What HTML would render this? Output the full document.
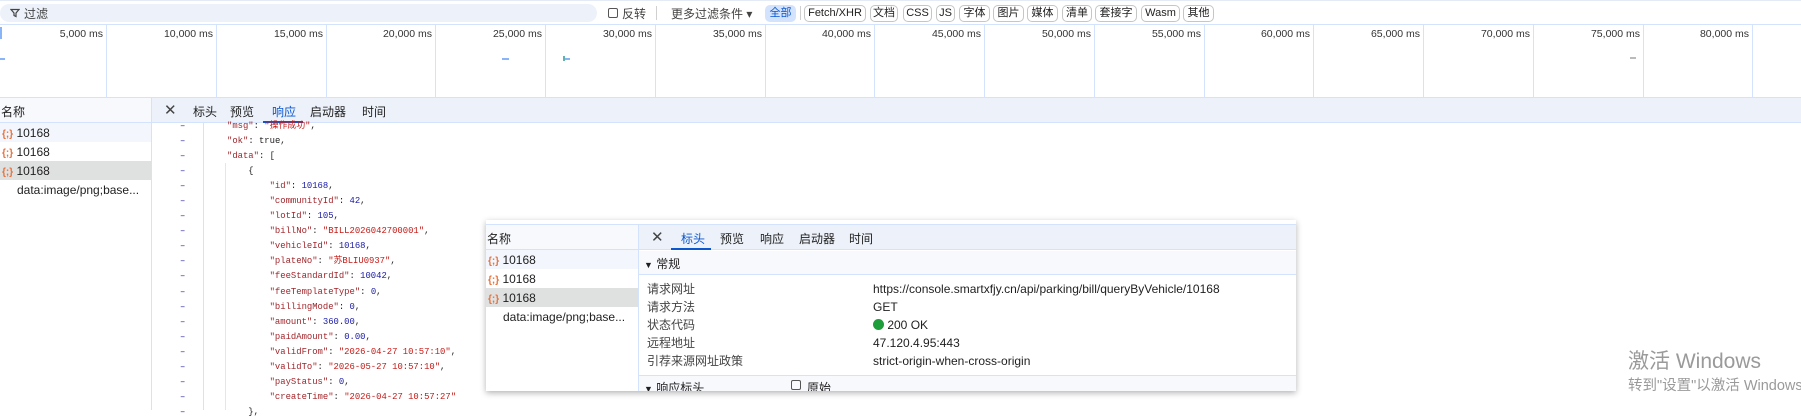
<!DOCTYPE html>
<html><head><meta charset="utf-8"><style>
*{box-sizing:border-box;margin:0;padding:0}
body{width:1801px;height:410px;overflow:hidden;background:#fff;font-family:"Liberation Sans","Noto Sans CJK SC",sans-serif;font-size:12px;color:#1f1f1f;position:relative}
.a{position:absolute;white-space:nowrap}
.btn{position:absolute;top:5px;height:17px;border:1px solid #c4c7c5;border-radius:5px;font-size:11px;line-height:15px;text-align:center;color:#1f1f1f}
.tl{position:absolute;top:25px;height:73px;width:1px;background:#d3e3fd}
.tlab{position:absolute;top:28px;font-size:10.5px;color:#333;text-align:right;width:70px}
.code{font-family:"Liberation Mono","Noto Sans CJK SC",monospace;font-size:8.9px;position:absolute;white-space:pre}
.k{color:#a1262b}.s{color:#c41a16}.n{color:#1a1aa6}
.ic{color:#e8703a;font-size:10px;font-weight:bold}
</style></head><body>
<div class="a" style="left:0;top:0;width:1801px;height:25px;border-bottom:1px solid #d3e3fd;border-top:1px solid #e4ebf7"></div>
<div class="a" style="left:0;top:4px;width:597px;height:18px;background:#edf2fa;border-radius:9px"></div>
<svg class="a" style="left:10px;top:8px" width="10" height="10" viewBox="0 0 10 10"><path d="M1 1.5H9L6 5V8.5L4 7.5V5Z" fill="none" stroke="#444" stroke-width="1.2"/></svg>
<div class="a" style="left:24px;top:5px;font-size:12px;color:#444">过滤</div>
<div class="a" style="left:608px;top:8px;width:10px;height:10px;border:1px solid #555;border-radius:2px"></div>
<div class="a" style="left:622px;top:5px;color:#444">反转</div>
<div class="a" style="left:656px;top:6px;width:1px;height:14px;background:#d0d0d0"></div>
<div class="a" style="left:671px;top:5px;color:#444">更多过滤条件 ▾</div>
<div class="btn" style="left:765px;width:31px;background:#d3e3fd;border-color:#d3e3fd;color:#0b57d0">全部</div>
<div class="a" style="left:800px;top:6px;width:1px;height:14px;background:#d0d0d0"></div>
<div class="btn" style="left:804px;width:62px">Fetch/XHR</div>
<div class="btn" style="left:870px;width:28px">文档</div>
<div class="btn" style="left:903px;width:29px">CSS</div>
<div class="btn" style="left:936px;width:19px">JS</div>
<div class="btn" style="left:959px;width:31px">字体</div>
<div class="btn" style="left:993px;width:31px">图片</div>
<div class="btn" style="left:1027px;width:31px">媒体</div>
<div class="btn" style="left:1062px;width:30px">清单</div>
<div class="btn" style="left:1095px;width:42px">套接字</div>
<div class="btn" style="left:1141px;width:39px">Wasm</div>
<div class="btn" style="left:1183px;width:31px">其他</div>
<div class="a" style="left:0;top:97px;width:1801px;height:1px;background:#d3e3fd"></div>
<div class="tl" style="left:106px"></div><div class="tlab" style="left:33px">5,000 ms</div>
<div class="tl" style="left:216px"></div><div class="tlab" style="left:143px">10,000 ms</div>
<div class="tl" style="left:326px"></div><div class="tlab" style="left:253px">15,000 ms</div>
<div class="tl" style="left:435px"></div><div class="tlab" style="left:362px">20,000 ms</div>
<div class="tl" style="left:545px"></div><div class="tlab" style="left:472px">25,000 ms</div>
<div class="tl" style="left:655px"></div><div class="tlab" style="left:582px">30,000 ms</div>
<div class="tl" style="left:765px"></div><div class="tlab" style="left:692px">35,000 ms</div>
<div class="tl" style="left:874px"></div><div class="tlab" style="left:801px">40,000 ms</div>
<div class="tl" style="left:984px"></div><div class="tlab" style="left:911px">45,000 ms</div>
<div class="tl" style="left:1094px"></div><div class="tlab" style="left:1021px">50,000 ms</div>
<div class="tl" style="left:1204px"></div><div class="tlab" style="left:1131px">55,000 ms</div>
<div class="tl" style="left:1313px"></div><div class="tlab" style="left:1240px">60,000 ms</div>
<div class="tl" style="left:1423px"></div><div class="tlab" style="left:1350px">65,000 ms</div>
<div class="tl" style="left:1533px"></div><div class="tlab" style="left:1460px">70,000 ms</div>
<div class="tl" style="left:1643px"></div><div class="tlab" style="left:1570px">75,000 ms</div>
<div class="tl" style="left:1752px"></div><div class="tlab" style="left:1679px">80,000 ms</div>
<div class="a" style="left:0;top:27px;width:2px;height:12px;background:#8ab4f8"></div>
<div class="a" style="left:0;top:58px;width:5px;height:2px;background:#8ab4f8"></div>
<div class="a" style="left:502px;top:58px;width:7px;height:2px;background:#8ab4f8"></div>
<div class="a" style="left:563px;top:56px;width:2px;height:5px;background:#5fb3b3"></div>
<div class="a" style="left:565px;top:58px;width:5px;height:2px;background:#8ab4f8"></div>
<div class="a" style="left:1630px;top:57px;width:6px;height:2px;background:#bbb"></div>
<div class="a" style="left:0;top:98px;width:152px;height:25px;background:#f8f9fd;border-bottom:1px solid #d3e3fd"></div>
<div class="a" style="left:1px;top:103px">名称</div>
<div class="a" style="left:151px;top:98px;width:1px;height:312px;background:#d3e3fd"></div>
<div class="a" style="left:0;top:123px;width:151px;height:19px;background:#f3f6fc"></div>
<div class="a" style="left:0;top:161px;width:151px;height:19px;background:#dfe1e0"></div>
<div class="a" style="left:2px;top:126px"><span class="ic">{;}</span> 10168</div>
<div class="a" style="left:2px;top:145px"><span class="ic">{;}</span> 10168</div>
<div class="a" style="left:2px;top:164px"><span class="ic">{;}</span> 10168</div>
<div class="a" style="left:17px;top:183px">data:image/png;base...</div>
<div class="a" style="left:152px;top:98px;width:1649px;height:25px;background:#edf2fa;border-bottom:1px solid #d3e3fd"></div>
<div class="a" style="left:164px;top:101px;font-size:15px;color:#444">✕</div>
<div class="a" style="left:193px;top:103px">标头</div>
<div class="a" style="left:230px;top:103px">预览</div>
<div class="a" style="left:272px;top:103px;color:#0b57d0">响应</div>
<div class="a" style="left:263px;top:121px;width:40px;height:2px;background:#0b57d0"></div>
<div class="a" style="left:310px;top:103px">启动器</div>
<div class="a" style="left:362px;top:103px">时间</div>
<div class="a" style="left:203px;top:123px;width:1px;height:287px;background:#d3e3fd"></div>
<div class="a" style="left:225px;top:163px;width:1px;height:247px;background:#e6e6e6"></div>
<div class="code" style="left:180px;top:119px;line-height:15.05px;color:#1a1aa6">–
–
–
–
–
–
–
–
–
–
–
–
–
–
–
–
–
–
–
–</div>
<div class="code" style="left:227px;top:119px;line-height:15.05px;color:#222"><span class="k">"msg"</span>: <span class="s">"操作成功"</span>,
<span class="k">"ok"</span>: true,
<span class="k">"data"</span>: [
    {
        <span class="k">"id"</span>: <span class="n">10168</span>,
        <span class="k">"communityId"</span>: <span class="n">42</span>,
        <span class="k">"lotId"</span>: <span class="n">105</span>,
        <span class="k">"billNo"</span>: <span class="s">"BILL2026042700001"</span>,
        <span class="k">"vehicleId"</span>: <span class="n">10168</span>,
        <span class="k">"plateNo"</span>: <span class="s">"苏BLIU0937"</span>,
        <span class="k">"feeStandardId"</span>: <span class="n">10042</span>,
        <span class="k">"feeTemplateType"</span>: <span class="n">0</span>,
        <span class="k">"billingMode"</span>: <span class="n">0</span>,
        <span class="k">"amount"</span>: <span class="n">360.00</span>,
        <span class="k">"paidAmount"</span>: <span class="n">0.00</span>,
        <span class="k">"validFrom"</span>: <span class="s">"2026-04-27 10:57:10"</span>,
        <span class="k">"validTo"</span>: <span class="s">"2026-05-27 10:57:10"</span>,
        <span class="k">"payStatus"</span>: <span class="n">0</span>,
        <span class="k">"createTime"</span>: <span class="s">"2026-04-27 10:57:27"</span>
    },</div>
<div class="a" style="left:486px;top:220px;width:810px;height:171px;background:#fff;box-shadow:0 2px 6px rgba(0,0,0,.3);overflow:hidden">
  <div class="a" style="left:0;top:0;width:810px;height:5px;border-bottom:1px solid #d3e3fd"></div>
  <div class="a" style="left:0;top:5px;width:152px;height:25px;background:#f8f9fd;border-bottom:1px solid #d3e3fd"></div>
  <div class="a" style="left:1px;top:10px">名称</div>
  <div class="a" style="left:152px;top:5px;width:1px;height:166px;background:#d3e3fd"></div>
  <div class="a" style="left:0;top:30px;width:152px;height:19px;background:#f3f6fc"></div>
  <div class="a" style="left:0;top:68px;width:152px;height:19px;background:#dfe1e0"></div>
  <div class="a" style="left:2px;top:33px"><span class="ic">{;}</span> 10168</div>
  <div class="a" style="left:2px;top:52px"><span class="ic">{;}</span> 10168</div>
  <div class="a" style="left:2px;top:71px"><span class="ic">{;}</span> 10168</div>
  <div class="a" style="left:17px;top:90px">data:image/png;base...</div>
  <div class="a" style="left:153px;top:5px;width:657px;height:25px;background:#edf2fa;border-bottom:1px solid #d3e3fd"></div>
  <div class="a" style="left:165px;top:8px;font-size:15px;color:#444">✕</div>
  <div class="a" style="left:195px;top:10px;color:#0b57d0">标头</div>
  <div class="a" style="left:185px;top:28px;width:40px;height:2px;background:#0b57d0"></div>
  <div class="a" style="left:234px;top:10px">预览</div>
  <div class="a" style="left:274px;top:10px">响应</div>
  <div class="a" style="left:313px;top:10px">启动器</div>
  <div class="a" style="left:363px;top:10px">时间</div>
  <div class="a" style="left:153px;top:31px;width:657px;height:24px;background:#f8f9fd;border-bottom:1px solid #d3e3fd"></div>
  <div class="a" style="left:158px;top:35px"><span style="font-size:9px">▼</span> 常规</div>
  <div class="a" style="left:161px;top:60px;color:#444;line-height:18px">请求网址<br>请求方法<br>状态代码<br>远程地址<br>引荐来源网址政策</div>
  <div class="a" style="left:387px;top:60px;line-height:18px">https://console.smartxfjy.cn/api/parking/bill/queryByVehicle/10168<br>GET<br><span style="display:inline-block;width:11px;height:11px;border-radius:50%;background:#1e9e3a;vertical-align:-1px"></span> 200 OK<br>47.120.4.95:443<br>strict-origin-when-cross-origin</div>
  <div class="a" style="left:153px;top:155px;width:657px;height:16px;background:#f8f9fd;border-top:1px solid #d3e3fd"></div>
  <div class="a" style="left:158px;top:159px"><span style="font-size:9px">▼</span> 响应标头</div>
  <div class="a" style="left:305px;top:160px;width:10px;height:10px;border:1px solid #555;border-radius:2px"></div>
  <div class="a" style="left:321px;top:159px">原始</div>
</div>
<div class="a" style="left:1628px;top:345px;font-size:21px;color:#9a9a9a">激活 Windows</div>
<div class="a" style="left:1628px;top:374px;font-size:14.5px;color:#9a9a9a">转到"设置"以激活 Windows。</div>
</body></html>
